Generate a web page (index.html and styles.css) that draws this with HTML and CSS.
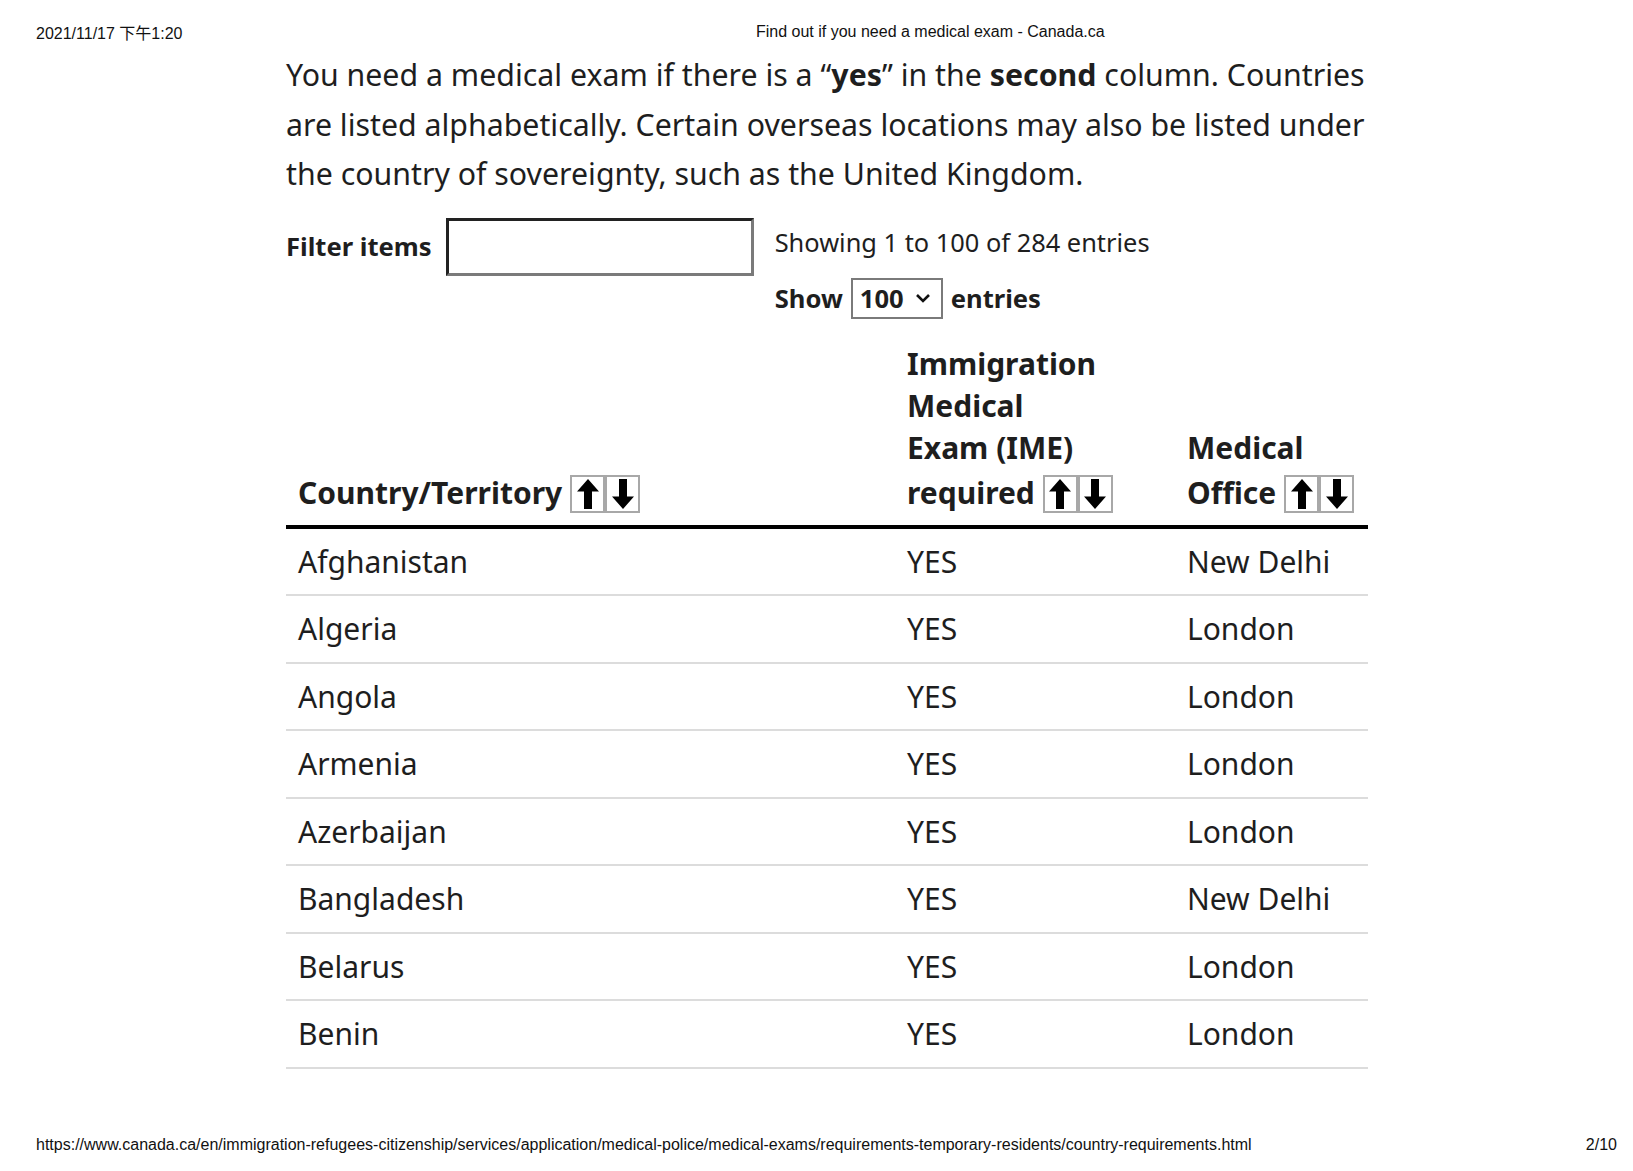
FILE: index.html
```html
<!DOCTYPE html>
<html lang="en">
<head>
<meta charset="utf-8">
<title>Find out if you need a medical exam - Canada.ca</title>
<link rel="stylesheet" href="styles.css">
</head>
<body>
<div class="page">
  <header class="print-head">
    <span class="print-date">2021/11/17 下午1:20</span>
    <span class="print-title">Find out if you need a medical exam - Canada.ca</span>
  </header>

  <main class="content">
    <p class="intro">You need a medical exam if there is a “<strong>yes</strong>” in the <strong>second</strong> column. Countries are listed alphabetically. Certain overseas locations may also be listed under the country of sovereignty, such as the United Kingdom.</p>

    <div class="controls">
      <div class="filter">
        <label class="filter-label" for="filter">Filter items</label>
        <input class="filter-input" id="filter" type="text">
      </div>
      <div class="info">
        <div class="showing">Showing 1 to 100 of 284 entries</div>
        <div class="length">
          <span>Show</span>
          <span class="select">100
            <svg class="chev" viewBox="0 0 16 10" width="16" height="10"><path d="M2 2 L8 8 L14 2" fill="none" stroke="#111" stroke-width="2.6"/></svg>
          </span>
          <span>entries</span>
        </div>
      </div>
    </div>

    <table class="data">
      <colgroup>
        <col class="c1"><col class="c2"><col class="c3">
      </colgroup>
      <thead>
        <tr>
          <th><span class="lastline">Country/Territory <span class="sort"><span class="sbtn"><svg viewBox="0 0 22 30" width="22" height="30"><polygon points="11,0 22,12.5 15,12.5 15,30 7,30 7,12.5 0,12.5" fill="#000"/></svg></span><span class="sbtn"><svg viewBox="0 0 22 30" width="22" height="30"><polygon points="11,30 22,17.5 15,17.5 15,0 7,0 7,17.5 0,17.5" fill="#000"/></svg></span></span></span></th>
          <th>Immigration<br>Medical<br>Exam (IME)<span class="lastline">required <span class="sort"><span class="sbtn"><svg viewBox="0 0 22 30" width="22" height="30"><polygon points="11,0 22,12.5 15,12.5 15,30 7,30 7,12.5 0,12.5" fill="#000"/></svg></span><span class="sbtn"><svg viewBox="0 0 22 30" width="22" height="30"><polygon points="11,30 22,17.5 15,17.5 15,0 7,0 7,17.5 0,17.5" fill="#000"/></svg></span></span></span></th>
          <th>Medical<span class="lastline">Office <span class="sort"><span class="sbtn"><svg viewBox="0 0 22 30" width="22" height="30"><polygon points="11,0 22,12.5 15,12.5 15,30 7,30 7,12.5 0,12.5" fill="#000"/></svg></span><span class="sbtn"><svg viewBox="0 0 22 30" width="22" height="30"><polygon points="11,30 22,17.5 15,17.5 15,0 7,0 7,17.5 0,17.5" fill="#000"/></svg></span></span></span></th>
        </tr>
      </thead>
      <tbody>
        <tr><td>Afghanistan</td><td>YES</td><td>New Delhi</td></tr>
        <tr><td>Algeria</td><td>YES</td><td>London</td></tr>
        <tr><td>Angola</td><td>YES</td><td>London</td></tr>
        <tr><td>Armenia</td><td>YES</td><td>London</td></tr>
        <tr><td>Azerbaijan</td><td>YES</td><td>London</td></tr>
        <tr><td>Bangladesh</td><td>YES</td><td>New Delhi</td></tr>
        <tr><td>Belarus</td><td>YES</td><td>London</td></tr>
        <tr><td>Benin</td><td>YES</td><td>London</td></tr>
      </tbody>
    </table>
  </main>

  <footer class="print-foot">
    <span class="print-url">https://www.canada.ca/en/immigration-refugees-citizenship/services/application/medical-police/medical-exams/requirements-temporary-residents/country-requirements.html</span>
    <span class="print-page">2/10</span>
  </footer>
</div>
</body>
</html>
```

FILE: styles.css
```css
html, body {
  margin: 0;
  padding: 0;
  background: #fff;
}

.page {
  width: 1633px;
  height: 1171px;
  display: flex;
  flex-direction: column;
  color: #1e1e1e;
  font-family: "Noto Sans", "Open Sans", sans-serif;
}

/* print header / footer */
.print-head,
.print-foot {
  font-family: "Liberation Sans", Arial, "Noto Sans CJK TC", sans-serif;
  font-size: 16px;
  color: #111;
  display: flex;
  align-items: center;
}

.print-head {
  height: 22px;
  padding: 21px 0 0 36px;
}

.print-date {
  width: 720px;
}

.print-foot {
  margin-top: auto;
  height: 22px;
  padding: 0 16px 15px 36px;
  justify-content: space-between;
}

/* content */
.content {
  width: 1082px;
  margin-left: 286px;
}

.intro {
  margin: 7px 0 0;
  font-size: 30.3px;
  line-height: 49.5px;
}

.intro strong {
  font-weight: 700;
}

.controls {
  display: flex;
  align-items: flex-start;
  margin-top: 18px;
}

.filter {
  display: flex;
  align-items: center;
  gap: 14px;
  padding-top: 1px;
}

.filter-label {
  font-size: 25.6px;
  font-weight: 700;
}

.filter-input {
  width: 302px;
  height: 52px;
  box-sizing: content-box;
  padding: 0;
  margin: 0;
  border: 3px solid;
  border-color: #222 #7a7a7a #7a7a7a #222;
  background: #fff;
}

.info {
  margin-left: 21px;
  display: flex;
  flex-direction: column;
  gap: 19px;
}

.showing {
  font-size: 25.4px;
  line-height: 34px;
  margin-top: 8px;
}

.length {
  display: flex;
  align-items: center;
  gap: 8px;
  font-size: 25.6px;
  font-weight: 700;
}

.select {
  display: inline-flex;
  align-items: center;
  gap: 11px;
  height: 37px;
  padding: 0 10px 0 7px;
  border: 2px solid #7a7a7a;
  font-weight: 700;
}

.chev {
  display: block;
}

/* table */
.data {
  width: 1082px;
  border-collapse: collapse;
  margin-top: 16px;
}

.c1 { width: 609px; }
.c2 { width: 280px; }
.c3 { width: 193px; }

.data th {
  text-align: left;
  vertical-align: bottom;
  font-size: 30px;
  font-weight: 700;
  line-height: 42px;
  padding: 8px 12px 11px;
  border-bottom: 4px solid #000;
}

.lastline {
  display: block;
  padding-top: 3px;
  white-space: nowrap;
}

.sort {
  display: inline-block;
  vertical-align: -5px;
  line-height: 0;
  white-space: nowrap;
}

.sbtn {
  display: inline-block;
  width: 31px;
  height: 34px;
  border: 2px solid #a8a8a8;
  background: #fff;
  line-height: 0;
  text-align: center;
}

.sbtn svg {
  display: inline-block;
  margin-top: 2px;
}

.data td {
  font-size: 30px;
  line-height: 49.5px;
  padding: 8px 12px 8px;
  border-bottom: 2px solid #dcdcdc;
}
```
